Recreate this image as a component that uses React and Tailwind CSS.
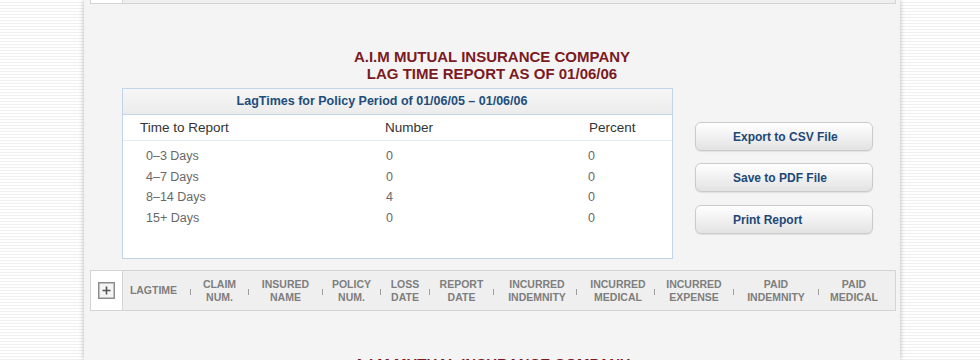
import React from 'react';

const rows = [
  { label: '0–3 Days', number: '0', percent: '0' },
  { label: '4–7 Days', number: '0', percent: '0' },
  { label: '8–14 Days', number: '4', percent: '0' },
  { label: '15+ Days', number: '0', percent: '0' },
];

const columns = [
  { lines: ['LAGTIME'], cls: 'w-[67px] pr-[6px]' },
  { lines: ['CLAIM', 'NUM.'], cls: 'w-[57px]' },
  { lines: ['INSURED', 'NAME'], cls: 'w-[73px]' },
  { lines: ['POLICY', 'NUM.'], cls: 'w-[57px]' },
  { lines: ['LOSS', 'DATE'], cls: 'w-[48px]' },
  { lines: ['REPORT', 'DATE'], cls: 'w-[63px]' },
  { lines: ['INCURRED', 'INDEMNITY'], cls: 'w-[82px] pl-[4px]' },
  { lines: ['INCURRED', 'MEDICAL'], cls: 'w-[77px] pl-[5px]' },
  { lines: ['INCURRED', 'EXPENSE'], cls: 'w-[78px]' },
  { lines: ['PAID', 'INDEMNITY'], cls: 'w-[84px]' },
  { lines: ['PAID', 'MEDICAL'], cls: 'w-[78px] pr-[8px]' },
];

const buttons = [
  { label: 'Export to CSV File', cls: '' },
  { label: 'Save to PDF File', cls: 'mt-[12px]' },
  { label: 'Print Report', cls: 'mt-[13px]' },
];

const PlusBox = () => (
  <svg width="17" height="17" viewBox="0 0 17 17">
    <rect x="0.75" y="0.75" width="15.5" height="15.5" fill="#f4f4f4" stroke="#8c8c8c" strokeWidth="1.5" />
    <path d="M4.5 8.5h8M8.5 4.5v8" stroke="#555" strokeWidth="1.6" />
  </svg>
);

const HeaderBar = () => (
  <div className="ml-[6px] w-[806px] h-[41px] flex border border-[#d4d4d4] bg-[#efefef]">
    <div className="w-[32px] shrink-0 flex items-center justify-center bg-white border-r border-[#d4d4d4]">
      <PlusBox />
    </div>
    {columns.map((col, i) => (
      <React.Fragment key={i}>
        {i > 0 && (
          <div className="w-px shrink-0 flex items-center pt-[3px]">
            <div className="w-px h-[6px] bg-[#9c9c9c]" />
          </div>
        )}
        <div className={`${col.cls} shrink-0 flex flex-col items-center justify-center text-center text-[10.5px] leading-[13px] font-bold text-[#7e7e7e]`}>
          {col.lines.map((line) => (
            <span key={line}>{line}</span>
          ))}
        </div>
      </React.Fragment>
    ))}
  </div>
);

const Title = ({ lines }) => (
  <div className="mt-[44px] text-center text-[15px] leading-[17px] font-bold text-[#7b1a1f]">
    {lines.map((l) => (
      <div key={l}>{l}</div>
    ))}
  </div>
);

const Section = () => (
  <div>
    <Title lines={['A.I.M MUTUAL INSURANCE COMPANY', 'LAG TIME REPORT AS OF 01/06/06']} />

    <div className="flex mt-[6px]">
      {/* Lag time table */}
      <div className="ml-[38px] w-[551px] h-[171px] border border-[#c2d5e8] bg-white">
        <div className="h-[26px] border-b border-[#c2d5e8] bg-gradient-to-b from-[#f6f6f6] to-[#ececec] flex items-center justify-center pr-[31px] text-[12.5px] font-bold text-[#214d7c]">
          LagTimes for Policy Period of 01/06/05 – 01/06/06
        </div>
        <div className="h-[26px] border-b border-[#e3ebf3] grid grid-cols-[262px_204px_1fr] items-center pt-[2px] text-[13.5px] text-[#333]">
          <div className="pl-[17px]">Time to Report</div>
          <div>Number</div>
          <div>Percent</div>
        </div>
        <div className="pt-[5px]">
          {rows.map((row) => (
            <div key={row.label} className="grid grid-cols-[263px_202px_1fr] leading-[20.5px] text-[12.5px] text-[#686868]">
              <div className="pl-[23px]">{row.label}</div>
              <div>{row.number}</div>
              <div>{row.percent}</div>
            </div>
          ))}
        </div>
      </div>

      {/* Actions */}
      <div className="ml-[22px] mt-[34px] w-[178px] flex flex-col">
        {buttons.map((b) => (
          <button
            key={b.label}
            className={`${b.cls} h-[29px] w-full text-left pl-[37px] rounded-[6px] border border-[#cacaca] bg-gradient-to-b from-white to-[#e3e3e3] shadow-[0_1px_1px_rgba(0,0,0,0.08)] text-[12px] font-bold text-[#1e4877]`}
          >
            {b.label}
          </button>
        ))}
      </div>
    </div>

    <div className="mt-[11px]">
      <HeaderBar />
    </div>
  </div>
);

const App = () => {
  return (
    <div className="w-[980px] h-[360px] overflow-hidden font-['Liberation_Sans',Arial,sans-serif] bg-[repeating-linear-gradient(180deg,#ffffff_0px,#ffffff_2px,#f0f0f0_2px,#f0f0f0_3px)]">
      <div className="ml-[84px] w-[816px] h-full bg-[#f4f4f4] shadow-[0_0_5px_rgba(0,0,0,0.28)]">
        {/* tail of the previous report's column bar */}
        <div className="ml-[6px] w-[806px] h-[4px] flex border-x border-b border-[#d4d4d4] bg-[#efefef]">
          <div className="w-[32px] bg-white border-r border-[#d4d4d4]" />
        </div>
        <Section />
        {/* start of the next report, cut by the window */}
        <Title lines={['A.I.M MUTUAL INSURANCE COMPANY']} />
      </div>
    </div>
  );
};

export default App;
